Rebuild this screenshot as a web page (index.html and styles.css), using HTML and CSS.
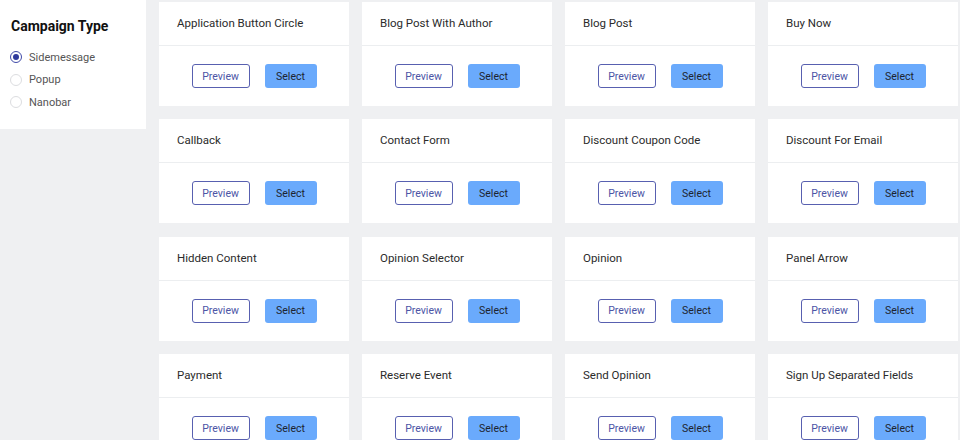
FILE: index.html
```html
<!DOCTYPE html>
<html lang="en">
  <head>
    <meta charset="UTF-8" />
    <title>Campaign Templates</title>
    <link rel="stylesheet" href="styles.css">
  </head>
  <body>
    <aside class="sidebar">
      <h2>Campaign Type</h2>
      <label class="option"><span class="radio checked"></span>Sidemessage</label>
      <label class="option"><span class="radio"></span>Popup</label>
      <label class="option"><span class="radio"></span>Nanobar</label>
    </aside>
    <main class="templates">
      <div class="card"><div class="card-title">Application Button Circle</div><div class="card-actions"><button class="btn-preview">Preview</button><button class="btn-select">Select</button></div></div>
      <div class="card"><div class="card-title">Blog Post With Author</div><div class="card-actions"><button class="btn-preview">Preview</button><button class="btn-select">Select</button></div></div>
      <div class="card"><div class="card-title">Blog Post</div><div class="card-actions"><button class="btn-preview">Preview</button><button class="btn-select">Select</button></div></div>
      <div class="card"><div class="card-title">Buy Now</div><div class="card-actions"><button class="btn-preview">Preview</button><button class="btn-select">Select</button></div></div>
      <div class="card"><div class="card-title">Callback</div><div class="card-actions"><button class="btn-preview">Preview</button><button class="btn-select">Select</button></div></div>
      <div class="card"><div class="card-title">Contact Form</div><div class="card-actions"><button class="btn-preview">Preview</button><button class="btn-select">Select</button></div></div>
      <div class="card"><div class="card-title">Discount Coupon Code</div><div class="card-actions"><button class="btn-preview">Preview</button><button class="btn-select">Select</button></div></div>
      <div class="card"><div class="card-title">Discount For Email</div><div class="card-actions"><button class="btn-preview">Preview</button><button class="btn-select">Select</button></div></div>
      <div class="card"><div class="card-title">Hidden Content</div><div class="card-actions"><button class="btn-preview">Preview</button><button class="btn-select">Select</button></div></div>
      <div class="card"><div class="card-title">Opinion Selector</div><div class="card-actions"><button class="btn-preview">Preview</button><button class="btn-select">Select</button></div></div>
      <div class="card"><div class="card-title">Opinion</div><div class="card-actions"><button class="btn-preview">Preview</button><button class="btn-select">Select</button></div></div>
      <div class="card"><div class="card-title">Panel Arrow</div><div class="card-actions"><button class="btn-preview">Preview</button><button class="btn-select">Select</button></div></div>
      <div class="card"><div class="card-title">Payment</div><div class="card-actions"><button class="btn-preview">Preview</button><button class="btn-select">Select</button></div></div>
      <div class="card"><div class="card-title">Reserve Event</div><div class="card-actions"><button class="btn-preview">Preview</button><button class="btn-select">Select</button></div></div>
      <div class="card"><div class="card-title">Send Opinion</div><div class="card-actions"><button class="btn-preview">Preview</button><button class="btn-select">Select</button></div></div>
      <div class="card"><div class="card-title">Sign Up Separated Fields</div><div class="card-actions"><button class="btn-preview">Preview</button><button class="btn-select">Select</button></div></div>
    </main>
  </body>
</html>
```

FILE: styles.css
```css
/* template picker */
body {
  margin: 0;
  height: 440px;
  overflow: hidden;
  background-color: #eff0f2;
  font-family: Roboto, "Liberation Sans", sans-serif;
  color: #333;
  display: flex;
  align-items: flex-start;
  gap: 13px;
}

.sidebar {
  width: 146px;
  height: 129px;
  box-sizing: border-box;
  background-color: #fff;
  padding: 18px 11px 0 10px;
}

.sidebar h2 {
  margin: 0 0 12px 1px;
  font-size: 14px;
  font-weight: 700;
  color: #111;
}

.option {
  display: flex;
  align-items: center;
  gap: 7px;
  height: 22.5px;
  font-size: 11px;
  color: #555;
}

.radio {
  width: 10px;
  height: 10px;
  border: 1px solid #dcdde0;
  border-radius: 50%;
  position: relative;
}

.radio.checked {
  border-color: #3f4aa8;
}

.radio.checked::after {
  content: "";
  position: absolute;
  left: 2px;
  top: 2px;
  width: 6px;
  height: 6px;
  border-radius: 50%;
  background-color: #2f3a9c;
}

.templates {
  display: grid;
  grid-template-columns: repeat(4, 190px);
  grid-auto-rows: 104px;
  gap: 13.4px 13px;
  padding-top: 2px;
}

.card {
  background-color: #fff;
  display: flex;
  flex-direction: column;
}

.card-title {
  height: 42px;
  padding-bottom: 1px;
  border-bottom: 1px solid #eceef0;
  padding-left: 18px;
  display: flex;
  align-items: center;
  font-size: 11.5px;
  color: #2b2b2b;
}

.card-actions {
  flex: 1;
  display: flex;
  justify-content: center;
  align-items: center;
  gap: 15px;
}

.card-actions button {
  height: 24px;
  border-radius: 3px;
  font-family: inherit;
  font-size: 10.5px;
  cursor: pointer;
}

.btn-preview {
  width: 58px;
  background-color: #fff;
  border: 1px solid #5860b0;
  color: #4c55a6;
}

.btn-select {
  width: 52px;
  background-color: #6aaafc;
  border: none;
  color: #1d2430;
}
```
